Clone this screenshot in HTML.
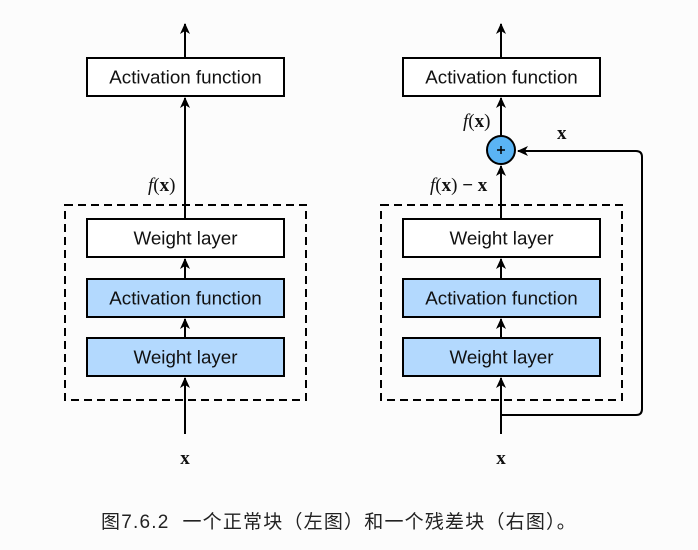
<!DOCTYPE html>
<html><head><meta charset="utf-8"><style>
html,body{margin:0;padding:0;background:#fcfcfc;}
svg{display:block}
.t{font-family:"Liberation Sans",sans-serif;font-size:18.8px;fill:#111;text-anchor:middle}
.m{font-family:"Liberation Serif",serif;font-size:19px;fill:#111}
.cap{position:absolute;left:0;top:507px;width:698px;text-align:center;font-family:"Liberation Sans","Noto Sans CJK SC",sans-serif;font-size:19px;letter-spacing:1.2px;color:#222;box-sizing:border-box;padding-right:20px}
</style></head><body>
<div style="position:relative;width:698px;height:550px;overflow:hidden">
<svg width="698" height="550" viewBox="0 0 698 550">
<defs>
<marker id="a" markerWidth="12" markerHeight="12" refX="10" refY="6" orient="auto" markerUnits="userSpaceOnUse">
<path d="M0,1 L11,6 L0,11 L3,6 Z" fill="#000"/></marker>
<g id="blk">
<rect x="65" y="205" width="241" height="195" fill="none" stroke="#000" stroke-width="2" stroke-dasharray="8,5"/>
<rect x="87" y="58" width="197" height="38" fill="#fff" stroke="#000" stroke-width="2"/>
<text class="t" x="185.5" y="83.5">Activation function</text>
<rect x="87" y="219" width="197" height="38" fill="#fff" stroke="#000" stroke-width="2"/>
<text class="t" x="185.5" y="244.5">Weight layer</text>
<rect x="87" y="279" width="197" height="38" fill="#b3d9fe" stroke="#000" stroke-width="2"/>
<text class="t" x="185.5" y="304.5">Activation function</text>
<rect x="87" y="338" width="197" height="38" fill="#b3d9fe" stroke="#000" stroke-width="2"/>
<text class="t" x="185.5" y="363.5">Weight layer</text>
<line x1="185" y1="58" x2="185" y2="24" stroke="#000" stroke-width="2" marker-end="url(#a)"/>
<line x1="185" y1="279" x2="185" y2="259" stroke="#000" stroke-width="2" marker-end="url(#a)"/>
<line x1="185" y1="338" x2="185" y2="319" stroke="#000" stroke-width="2" marker-end="url(#a)"/>
<line x1="185" y1="434" x2="185" y2="378" stroke="#000" stroke-width="2" marker-end="url(#a)"/>
<text class="m" x="185" y="464" text-anchor="middle" font-weight="bold">x</text>
</g>
</defs>
<use href="#blk"/>
<use href="#blk" x="316"/>
<line x1="185" y1="219" x2="185" y2="98" stroke="#000" stroke-width="2" marker-end="url(#a)"/>
<text class="m" x="148" y="191"><tspan font-style="italic">f</tspan>(<tspan font-weight="bold">x</tspan>)</text>
<line x1="501" y1="219" x2="501" y2="166" stroke="#000" stroke-width="2" marker-end="url(#a)"/>
<line x1="501" y1="136" x2="501" y2="98" stroke="#000" stroke-width="2" marker-end="url(#a)"/>
<circle cx="501" cy="150" r="14" fill="#5ab4f5" stroke="#000" stroke-width="2"/>
<path d="M497 150h8M501 146v8" stroke="#000" stroke-width="1.5"/>
<path d="M501 415 H636 Q642 415 642 409 V157 Q642 151 636 151 H518" fill="none" stroke="#000" stroke-width="2" marker-end="url(#a)"/>
<text class="m" x="463" y="127"><tspan font-style="italic">f</tspan>(<tspan font-weight="bold">x</tspan>)</text>
<text class="m" x="430" y="191"><tspan font-style="italic">f</tspan>(<tspan font-weight="bold">x</tspan>) <tspan font-weight="bold">−</tspan> <tspan font-weight="bold">x</tspan></text>
<text class="m" x="557" y="139" font-weight="bold">x</text>
</svg>
<div class="cap">图7.6.2&nbsp; 一个正常块（左图）和一个残差块（右图）。</div>
</div>
</body></html>
